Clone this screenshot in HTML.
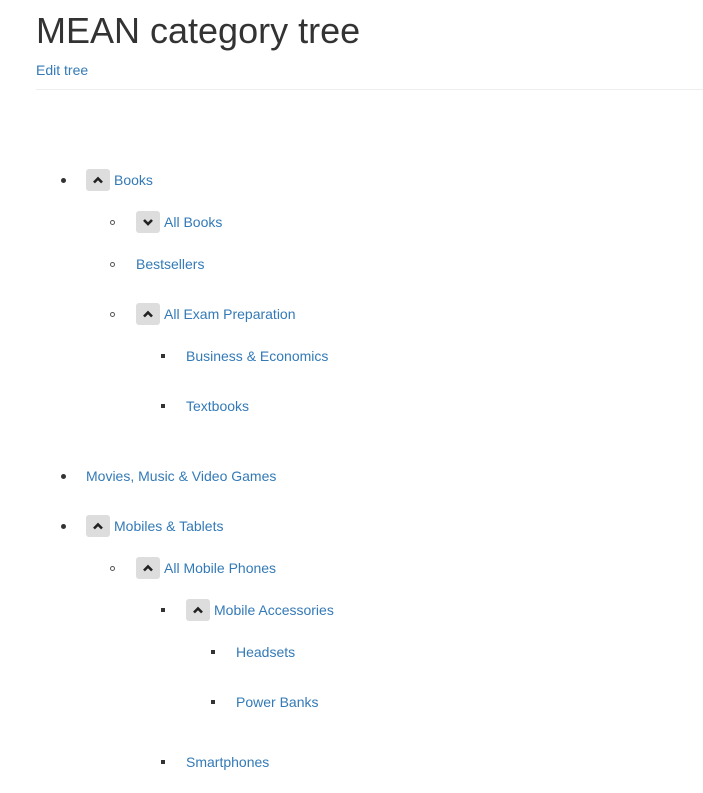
<!DOCTYPE html>
<html><head><style>
body{margin:0;width:703px;height:793px;background:#fff;font-family:"Liberation Sans",sans-serif;position:relative;overflow:hidden}
h1{position:absolute;left:36px;top:9px;margin:0;font-size:36px;font-weight:500;color:#333;line-height:44px}
a{color:#337ab7;text-decoration:none;font-size:14px}
.edit{position:absolute;left:36px;top:61px;line-height:18px}
.hr{position:absolute;left:36px;right:0;top:89px;border-top:1px solid #eee}
.r{position:absolute;height:22px;display:flex;align-items:center;line-height:22px}
.b{width:24px;height:22px;background:#ddd;border-radius:3px;display:flex;align-items:center;justify-content:center;margin-right:4px}
.m{position:absolute;background:#333}
.disc{width:5px;height:5px;border-radius:50%}
.circ{width:3px;height:3px;border-radius:50%;background:none;border:1px solid #555}
.sq{width:4px;height:4px}
</style></head><body>
<h1>MEAN category tree</h1>
<a class="edit">Edit tree</a>
<div class="hr"></div>

<div class="m disc" style="left:61px;top:178px"></div>
<div class="r" style="left:86px;top:169px"><span class="b"><svg width="12" height="10" viewBox="0 0 12 10"><path d="M2 7.5L6 3.5L10 7.5" fill="none" stroke="#222" stroke-width="2.6"/></svg></span><a>Books</a></div>

<div class="m circ" style="left:110px;top:220px"></div>
<div class="r" style="left:136px;top:211px"><span class="b"><svg width="12" height="10" viewBox="0 0 12 10"><path d="M2 3L6 7L10 3" fill="none" stroke="#222" stroke-width="2.6"/></svg></span><a>All Books</a></div>

<div class="m circ" style="left:110px;top:262px"></div>
<div class="r" style="left:136px;top:253px"><a>Bestsellers</a></div>

<div class="m circ" style="left:110px;top:312px"></div>
<div class="r" style="left:136px;top:303px"><span class="b"><svg width="12" height="10" viewBox="0 0 12 10"><path d="M2 7.5L6 3.5L10 7.5" fill="none" stroke="#222" stroke-width="2.6"/></svg></span><a>All Exam Preparation</a></div>

<div class="m sq" style="left:161px;top:354px"></div>
<div class="r" style="left:186px;top:345px"><a>Business &amp; Economics</a></div>

<div class="m sq" style="left:161px;top:404px"></div>
<div class="r" style="left:186px;top:395px"><a>Textbooks</a></div>

<div class="m disc" style="left:61px;top:474px"></div>
<div class="r" style="left:86px;top:465px"><a>Movies, Music &amp; Video Games</a></div>

<div class="m disc" style="left:61px;top:524px"></div>
<div class="r" style="left:86px;top:515px"><span class="b"><svg width="12" height="10" viewBox="0 0 12 10"><path d="M2 7.5L6 3.5L10 7.5" fill="none" stroke="#222" stroke-width="2.6"/></svg></span><a>Mobiles &amp; Tablets</a></div>

<div class="m circ" style="left:110px;top:566px"></div>
<div class="r" style="left:136px;top:557px"><span class="b"><svg width="12" height="10" viewBox="0 0 12 10"><path d="M2 7.5L6 3.5L10 7.5" fill="none" stroke="#222" stroke-width="2.6"/></svg></span><a>All Mobile Phones</a></div>

<div class="m sq" style="left:161px;top:608px"></div>
<div class="r" style="left:186px;top:599px"><span class="b"><svg width="12" height="10" viewBox="0 0 12 10"><path d="M2 7.5L6 3.5L10 7.5" fill="none" stroke="#222" stroke-width="2.6"/></svg></span><a>Mobile Accessories</a></div>

<div class="m sq" style="left:211px;top:650px"></div>
<div class="r" style="left:236px;top:641px"><a>Headsets</a></div>

<div class="m sq" style="left:211px;top:700px"></div>
<div class="r" style="left:236px;top:691px"><a>Power Banks</a></div>

<div class="m sq" style="left:161px;top:760px"></div>
<div class="r" style="left:186px;top:751px"><a>Smartphones</a></div>
</body></html>
